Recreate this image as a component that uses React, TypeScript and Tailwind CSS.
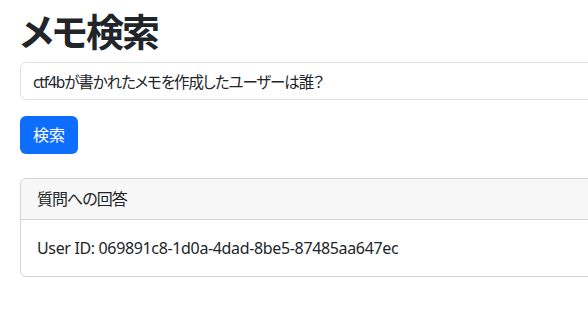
export default function App() {
    return (
        <div className="w-full h-[311px] overflow-hidden bg-white text-[#212529] font-['Noto_Sans','Noto_Sans_CJK_JP',sans-serif] [font-feature-settings:'palt']">
            <div className="w-[760px] px-5 pt-[6px]">
                <h1 className="text-[38px] leading-[48px] font-bold tracking-[-2px] mb-2 font-['Noto_Sans_CJK_JP',sans-serif]">メモ検索</h1>

                {/* Search form */}
                <input
                    type="text"
                    defaultValue="ctf4bが書かれたメモを作成したユーザーは誰？"
                    className="block w-full h-[38px] px-3 text-[15.5px] tracking-[-1.1px] border border-[#dee2e6] rounded-md mb-4 outline-none"
                />
                <button className="h-[38px] px-[13px] text-base text-white bg-[#0d6efd] rounded-md">検索</button>

                {/* Answer card */}
                <div className="mt-6 border border-[#d3d3d3] rounded-md">
                    <div className="px-4 py-2 leading-6 tracking-[-1px] bg-[#f7f7f7] border-b border-[#d3d3d3] rounded-t-md">質問への回答</div>
                    <div className="p-4 leading-6 tracking-[-0.35px]">User ID: 069891c8-1d0a-4dad-8be5-87485aa647ec</div>
                </div>
            </div>
        </div>
    );
}
